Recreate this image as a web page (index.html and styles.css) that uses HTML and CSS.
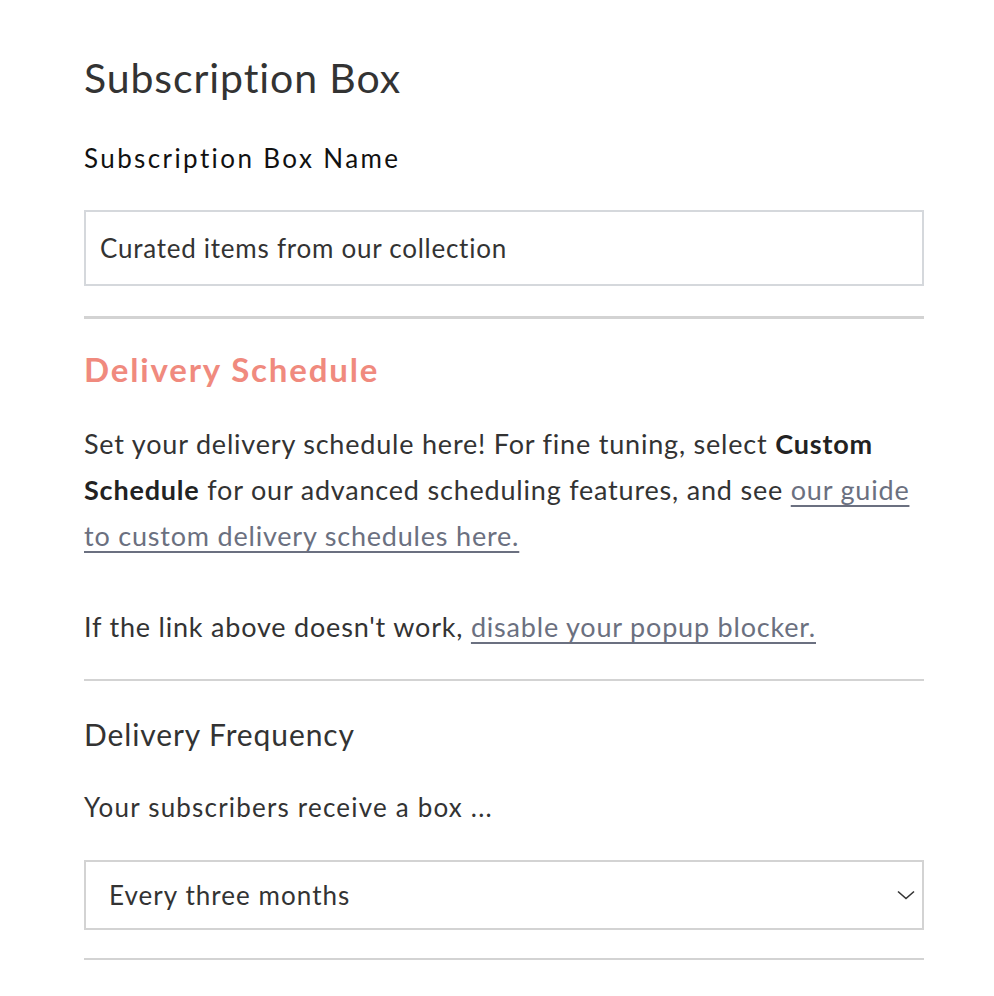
FILE: index.html
```html
<!DOCTYPE html>
<html lang="en">
<head>
<meta charset="utf-8">
<title>Subscription Box</title>
<link rel="stylesheet" href="styles.css">
</head>
<body>
<main class="page">
  <h1 class="title">Subscription Box</h1>
  <label class="field-label" for="box-name">Subscription Box Name</label>
  <input class="text-input" id="box-name" type="text" value="Curated items from our collection">
  <hr class="divider divider-thick">
  <h2 class="section-title">Delivery Schedule</h2>
  <p class="body-text">Set your delivery schedule here! For fine tuning, select <strong>Custom Schedule</strong> for our advanced scheduling features, and see <a href="#" class="link">our guide to custom delivery schedules here.</a></p>
  <p class="body-text note">If the link above doesn't work, <a href="#" class="link">disable your popup blocker.</a></p>
  <hr class="divider divider-mid">
  <h3 class="sub-title">Delivery Frequency</h3>
  <p class="hint">Your subscribers receive a box ...</p>
  <div class="select">
    <span class="select-value">Every three months</span>
    <svg class="chevron" width="18" height="10" viewBox="0 0 18 10" aria-hidden="true"><path d="M1 1.5 L9 8.5 L17 1.5" fill="none" stroke="#333" stroke-width="1.6"/></svg>
  </div>
  <hr class="divider divider-end">
</main>
</body>
</html>
```
FILE: styles.css
```css
* { box-sizing: border-box; }
html, body { margin: 0; padding: 0; background: #fff; }
body {
  font-family: "Lato", "Noto Sans", sans-serif;
  color: #333;
}
.page {
  width: 840px;
  margin-left: 84px;
  padding-top: 54px;
  display: flex;
  flex-direction: column;
}
.title {
  margin: 0;
  font-size: 41px;
  line-height: 48px;
  font-weight: 400;
  letter-spacing: 0.9px;
  color: #333;
}
.field-label {
  margin-top: 41px;
  font-size: 26px;
  line-height: 30px;
  color: #111;
  letter-spacing: 2.4px;
}
.text-input {
  margin-top: 37px;
  width: 100%;
  height: 76px;
  border: 2px solid #d5d8dc;
  border-radius: 0;
  padding: 0 14px;
  font: inherit;
  font-size: 26px;
  letter-spacing: 0.75px;
  color: #333;
  outline: none;
}
.divider {
  margin: 0;
  border: 0;
  height: 2px;
  background: #d3d3d3;
  width: 100%;
}
.divider-thick {
  margin-top: 30px;
  height: 3px;
}
.section-title {
  margin: 30px 0 0;
  font-size: 33px;
  line-height: 40px;
  font-weight: 700;
  letter-spacing: 1.85px;
  color: #f08a7e;
}
.body-text {
  margin: 32px 0 0;
  font-size: 27px;
  line-height: 46px;
  letter-spacing: 0.8px;
  color: #333;
}
.body-text strong { font-weight: 700; color: #222; }
.note { margin-top: 45px; }
.link {
  color: #6b7080;
  text-decoration: underline;
  text-underline-offset: 5px;
  text-decoration-thickness: 1.5px;
}
.divider-mid { margin-top: 29px; }
.sub-title {
  margin: 33px 0 0;
  font-size: 30px;
  line-height: 40px;
  font-weight: 400;
  letter-spacing: 0.9px;
  color: #333;
}
.hint {
  margin: 35px 0 0;
  font-size: 26px;
  line-height: 36px;
  letter-spacing: 1.2px;
  color: #333;
}
.select {
  margin-top: 35px;
  height: 70px;
  border: 2px solid #d3d3d3;
  display: flex;
  align-items: center;
  justify-content: space-between;
  padding: 0 7px 0 23px;
}
.select-value {
  font-size: 26px;
  letter-spacing: 1.05px;
  color: #333;
}
.chevron { display: block; }
.divider-end { margin-top: 28px; }
```
